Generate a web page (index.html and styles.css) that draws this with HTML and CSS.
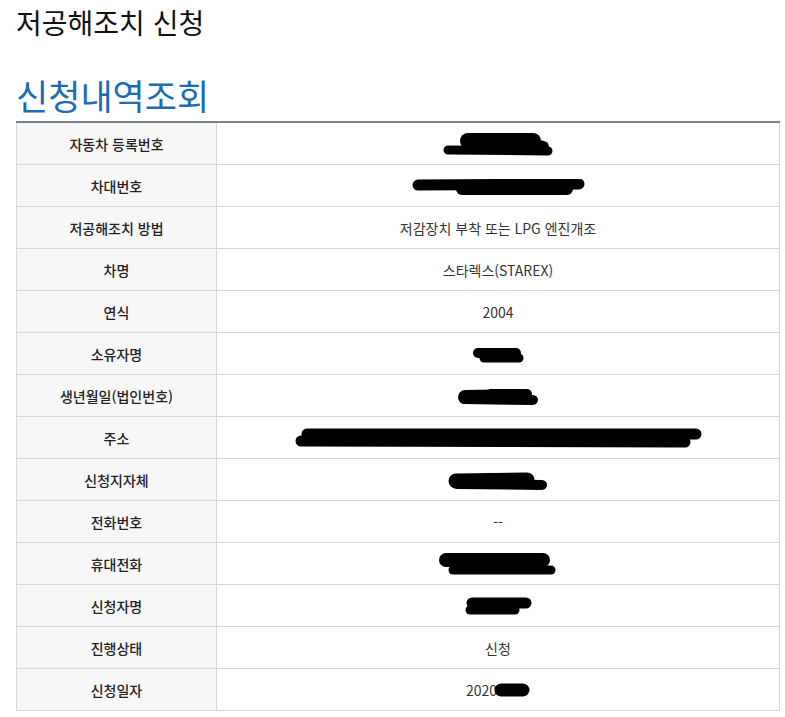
FILE: index.html
```html
<!DOCTYPE html>
<html lang="ko">
<head>
<meta charset="utf-8">
<title>저공해조치 신청</title>
<link rel="stylesheet" href="styles.css">
</head>
<body>
<h1 class="page-title">저공해조치 신청</h1>
<h2 class="section-title">신청내역조회</h2>
<table class="info-table">
  <tbody>
    <tr><th>자동차 등록번호</th><td>
      <svg class="redact" width="110" height="24" viewBox="0 0 110 24"><path d="M25 9 L90 9" stroke-width="16"/><path d="M5 18 L105 19" stroke-width="9"/><path d="M86 11 L100 15" stroke-width="12"/></svg>
    </td></tr>
    <tr><th>차대번호</th><td>
      <svg class="redact" width="173" height="17" viewBox="0 0 173 17"><path d="M6 6 L167 5" stroke-width="11"/><path d="M50 10 L155 10" stroke-width="12"/></svg>
    </td></tr>
    <tr><th>저공해조치 방법</th><td>저감장치 부착 또는 LPG 엔진개조</td></tr>
    <tr><th>차명</th><td>스타렉스(STAREX)</td></tr>
    <tr><th>연식</th><td>2004</td></tr>
    <tr><th>소유자명</th><td>
      <svg class="redact" width="53" height="17" viewBox="0 0 53 17"><path d="M6 6 L44 6" stroke-width="10"/><path d="M12 11 L47 11" stroke-width="9"/></svg>
    </td></tr>
    <tr><th>생년월일(법인번호)</th><td>
      <svg class="redact" width="82" height="19" viewBox="0 0 82 19"><path d="M8 10 L64 9" stroke-width="14"/><path d="M7 12 L76 13" stroke-width="10"/><path d="M34 7 L70 7" stroke-width="10"/></svg>
    </td></tr>
    <tr><th>주소</th><td>
      <svg class="redact" width="407" height="21" viewBox="0 0 407 21"><path d="M12 6 L401 6" stroke-width="11"/><path d="M6 13 L390 14" stroke-width="11"/></svg>
    </td></tr>
    <tr><th>신청지자체</th><td>
      <svg class="redact" width="102" height="20" viewBox="0 0 102 20"><path d="M9 10 L80 9" stroke-width="15"/><path d="M10 13 L95 14" stroke-width="10"/></svg>
    </td></tr>
    <tr><th>전화번호</th><td>--</td></tr>
    <tr><th>휴대전화</th><td>
      <svg class="redact" width="118" height="25" viewBox="0 0 118 25"><path d="M7 9 L104 9" stroke-width="14"/><path d="M14 19 L112 19" stroke-width="9"/></svg>
    </td></tr>
    <tr><th>신청자명</th><td>
      <svg class="redact" width="70" height="19" viewBox="0 0 70 19"><path d="M9 6 L63 6" stroke-width="11"/><path d="M7 13 L52 13" stroke-width="9"/></svg>
    </td></tr>
    <tr><th>진행상태</th><td>신청</td></tr>
    <tr><th>신청일자</th><td>2020<svg class="redact inline" width="36" height="15" viewBox="0 0 36 15"><path d="M7 7 L29 7" stroke-width="13"/></svg></td></tr>
  </tbody>
</table>
</body>
</html>
```

FILE: styles.css
```css
html, body {
  margin: 0;
  padding: 0;
  background: #ffffff;
}

body {
  padding: 0 5px 0 16px;
  font-family: "Noto Sans CJK KR", "Noto Sans", sans-serif;
  color: #222222;
}

.page-title {
  margin: 6px 0 0;
  font-size: 28px;
  line-height: 33px;
  font-weight: 400;
  color: #111111;
}

.section-title {
  margin: 36px 0 6px;
  font-size: 35px;
  line-height: 40px;
  font-weight: 400;
  color: #1b6bb5;
}

.info-table {
  width: 764px;
  border-collapse: collapse;
  border-top: 2px solid #7a8390;
  font-size: 14px;
}

.info-table th,
.info-table td {
  height: 41px;
  padding: 0;
  border: 1px solid #d3d8de;
  text-align: center;
  vertical-align: middle;
  line-height: 20px;
}

.info-table tr:first-child th,
.info-table tr:first-child td {
  border-top: none;
}

.info-table th {
  width: 199px;
  background: #f7f7f7;
  font-weight: 500;
  color: #222222;
}

.info-table td {
  font-weight: 400;
  color: #333333;
}

.redact {
  display: inline-block;
  vertical-align: middle;
}

.redact path {
  stroke: #000000;
  stroke-linecap: round;
  fill: none;
}

.redact.inline {
  margin-left: -3px;
  vertical-align: -2px;
}
```
